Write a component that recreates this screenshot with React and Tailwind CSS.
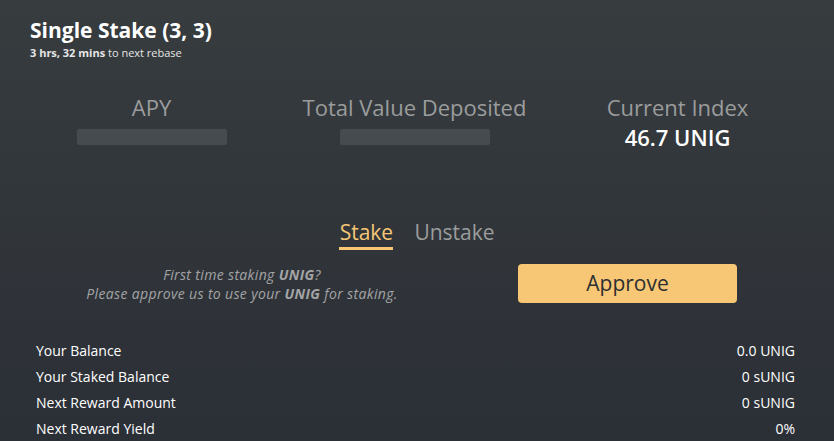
export default function App() {

  const rows = [
    ["Your Balance", "0.0 UNIG"],
    ["Your Staked Balance", "0 sUNIG"],
    ["Next Reward Amount", "0 sUNIG"],
    ["Next Reward Yield", "0%"]
  ];

  return (
    <div
      className="w-[834px] h-[441px] overflow-hidden bg-gradient-to-b from-[#373c3f] to-[#2b2f36] text-white"
      style={{ fontFamily: "'Open Sans', Lato, sans-serif" }}
    >

      <div className="pl-[30px] pt-[16px]">
        <h1 className="text-[21px] font-bold leading-[29px]">
          Single Stake (3, 3)
        </h1>
        <p className="text-[11px] leading-[15px] text-[#e6e6e6]">
          <span className="font-bold">3 hrs, 32 mins</span> to next rebase
        </p>
      </div>

      <div className="ml-[20px] mt-[32px] w-[789px] grid grid-cols-3">

        <div className="flex flex-col items-center">
          <div className="text-[22px] leading-[30px] text-[#9b9c9c]">APY</div>
          <div className="mt-[7px] h-[16px] w-[150px] rounded-[2px] bg-[#454b4f]" />
        </div>

        <div className="flex flex-col items-center">
          <div className="text-[22px] leading-[30px] text-[#9b9c9c]">Total Value Deposited</div>
          <div className="mt-[7px] h-[16px] w-[150px] rounded-[2px] bg-[#454b4f]" />
        </div>

        <div className="flex flex-col items-center">
          <div className="text-[22px] leading-[30px] text-[#9b9c9c]">Current Index</div>
          <div className="text-[22px] leading-[30px] font-semibold text-white">46.7 UNIG</div>
        </div>

      </div>

      <div className="mt-[67px] flex justify-center gap-[21px] text-[21px] leading-[26px]">
        <div className="flex flex-col items-center">
          <span className="text-[#f7c775]">Stake</span>
          <div className="mt-[2px] h-[3px] w-[54px] bg-[#f7c775]" />
        </div>
        <span className="text-[#9b9c9c]">Unstake</span>
      </div>

      <div className="mt-[14px] flex items-center">
        <div className="w-[484px] text-center text-[14px] leading-[19px] tracking-[0.35px] italic text-[#a3a4a5]">
          <div>First time staking <span className="font-bold">UNIG</span>?</div>
          <div>Please approve us to use your <span className="font-bold">UNIG</span> for staking.</div>
        </div>
        <button className="ml-[34px] h-[39px] w-[219px] rounded-[4px] bg-[#f7c775] text-[21px] font-medium text-[#2d2f31]">
          Approve
        </button>
      </div>

      <div className="mt-[34px] pl-[36px] pr-[39px] flex flex-col">
        {rows.map(([label, value]) => (
          <div key={label} className="flex justify-between h-[26px] items-center text-[14px] text-white">
            <span>{label}</span>
            <span>{value}</span>
          </div>
        ))}
      </div>

    </div>
  );
}
